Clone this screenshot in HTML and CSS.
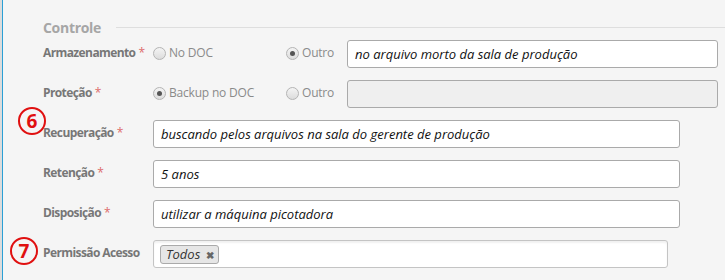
FILE: index.html
```html
<html>
<head>
<title>Controle</title>
<meta http-equiv="Content-Type" content="text/html; charset=UTF-8">
<link rel="stylesheet" href="styles.css">
</head>
<body>
  <div id="frame">
    <div class="legend"><span>Controle</span><div class="rule"></div></div>

    <div class="row">
      <label>Armazenamento<span class="req">*</span></label>
      <div class="radios">
        <span class="opt opt1"><i class="radio"></i>No DOC</span>
        <span class="opt"><i class="radio on"></i>Outro</span>
      </div>
      <div class="field short">no arquivo morto da sala de produção</div>
    </div>

    <div class="row">
      <label>Proteção<span class="req">*</span></label>
      <div class="radios">
        <span class="opt opt1"><i class="radio on"></i>Backup no DOC</span>
        <span class="opt"><i class="radio"></i>Outro</span>
      </div>
      <div class="field short disabled"></div>
    </div>

    <div class="row">
      <span class="mark m6">6</span>
      <label>Recuperação<span class="req">*</span></label>
      <div class="field wide">buscando pelos arquivos na sala do gerente de produção</div>
    </div>

    <div class="row">
      <label>Retenção<span class="req">*</span></label>
      <div class="field wide">5 anos</div>
    </div>

    <div class="row">
      <label>Disposição<span class="req">*</span></label>
      <div class="field wide">utilizar a máquina picotadora</div>
    </div>

    <div class="row">
      <span class="mark m7">7</span>
      <label>Permissão Acesso</label>
      <div class="field tags"><span class="tag">Todos <b>&#x2716;</b></span></div>
    </div>
  </div>
</body>
</html>
```
FILE: styles.css
```css
body {
  margin: 0;
  background: #dcdcdc;
  font-family: "Open Sans", sans-serif;
  font-size: 12px;
}
#frame {
  margin-left: 2px;
  border-left: 1px solid #2b9fd5;
  background: #f5f5f5;
  height: 280px;
  padding: 19px 0 0 40px;
  box-sizing: border-box;
}
.legend {
  display: flex;
  align-items: center;
  gap: 15px;
  height: 16px;
  color: #a6a6a6;
  font-weight: bold;
  font-size: 14px;
  letter-spacing: -0.3px;
}
.rule {
  flex: 1;
  border-top: 1px solid #dedede;
}
.row {
  position: relative;
  display: flex;
  align-items: center;
  height: 28px;
  margin-top: 12px;
}
.legend + .row { margin-top: 5px; }
label {
  width: 110px;
  flex: none;
  font-weight: bold;
  font-size: 12px;
  letter-spacing: -0.6px;
  color: #777;
  margin-top: -3px;
}
.req {
  color: #dd6b6b;
  font-weight: normal;
  margin-left: 3px;
}
.radios {
  display: flex;
  width: 194px;
  color: #8a8a8a;
  font-size: 12px;
  letter-spacing: -0.2px;
  margin-top: -3px;
}
.opt {
  display: flex;
  align-items: center;
}
.opt1 { width: 133px; }
.radio {
  width: 11px;
  height: 11px;
  border: 1px solid #b4b4b4;
  border-radius: 50%;
  background: linear-gradient(#f4f4f4, #dcdcdc);
  margin-right: 3px;
  margin-top: 2px;
  box-sizing: content-box;
  position: relative;
}
.radio.on::after {
  content: "";
  position: absolute;
  left: 3px;
  top: 3px;
  width: 5px;
  height: 5px;
  border-radius: 50%;
  background: #555;
}
.field {
  height: 26px;
  border: 1px solid #aaa;
  border-radius: 3px;
  background: #fff;
  font-style: italic;
  font-size: 13px;
  color: #111;
  padding: 0 7px;
  display: flex;
  align-items: center;
}
.short { width: 355px; }
.wide { width: 511px; }
.disabled { background: #efefef; }
.tags {
  width: 501px;
  padding: 0 6px;
  border-color: #c4c4c4;
  box-shadow: inset 0 2px 2px rgba(0, 0, 0, 0.06);
}
.tag {
  border: 1px solid #aaa;
  border-radius: 3px;
  background: #e6e6e6;
  padding: 0 4px 0 5px;
  height: 17px;
  line-height: 17px;
  color: #333;
}
.tag b {
  color: #666;
  font-size: 10px;
  font-style: normal;
  margin-left: 2px;
}
.mark {
  position: absolute;
  width: 24px;
  height: 24px;
  border: 2px solid #e01010;
  border-radius: 50%;
  color: #e01010;
  font-weight: bold;
  font-size: 19px;
  line-height: 24px;
  text-align: center;
}
.m6 { left: -25px; top: -13px; }
.m7 { left: -33px; top: -3px; }
```
